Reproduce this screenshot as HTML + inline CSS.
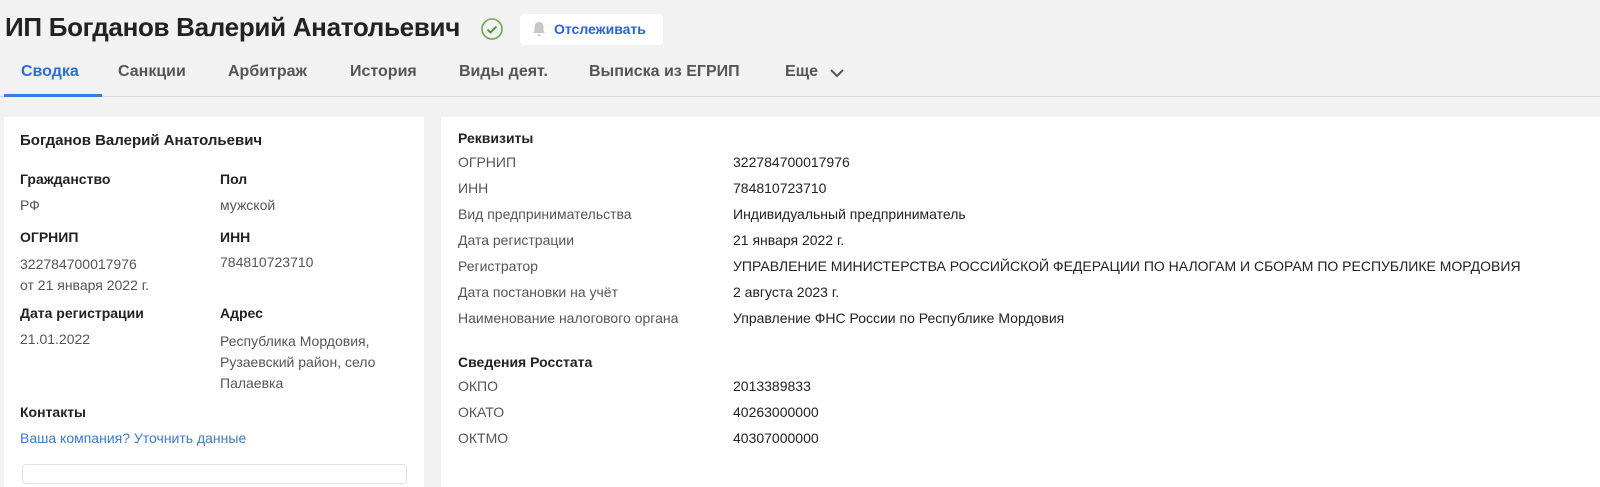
<!DOCTYPE html>
<html><head><meta charset="utf-8"><style>
*{margin:0;padding:0;box-sizing:border-box}
body{width:1600px;height:477px;overflow:hidden;background:#f2f2f2;font-family:"Liberation Sans",sans-serif;color:#222;position:relative}
.a{position:absolute;white-space:nowrap}
h1{position:absolute;left:5px;top:12px;font-size:26px;font-weight:bold;color:#222;letter-spacing:-0.3px}
.tab{position:absolute;top:63px;font-size:16px;font-weight:bold;color:#555}
.card{position:absolute;background:#fff}
.b{font-weight:bold;font-size:14px;color:#222}
.g{font-size:14px;color:#555}
.v{font-size:14px;color:#222}
</style></head><body>
<h1>ИП Богданов Валерий Анатольевич</h1>
<svg class="a" style="left:480px;top:17px" width="24" height="24" viewBox="0 0 24 24"><circle cx="12" cy="12" r="10" fill="none" stroke="#6aa84f" stroke-width="1.6"/><path d="M7.5 12.5l3 3 6-6" fill="none" stroke="#4a8f2a" stroke-width="1.8"/></svg>
<div class="a" style="left:520px;top:14px;width:143px;height:31px;background:#fff;border-radius:4px"></div>
<svg class="a" style="left:531px;top:21px" width="16" height="17" viewBox="0 0 16 17"><path d="M8 1c-3 0-4.5 2.5-4.5 5v4L2 12h12l-1.5-2V6c0-2.5-1.5-5-4.5-5zM6.3 13.5a1.7 1.7 0 0 0 3.4 0z" fill="#c8c8c8"/></svg>
<div class="a" style="left:554px;top:21px;font-size:14px;font-weight:bold;color:#2b62d9">Отслеживать</div>
<div class="tab" style="left:21px;color:#2b6cde">Сводка</div>
<div class="tab" style="left:118px">Санкции</div>
<div class="tab" style="left:228px">Арбитраж</div>
<div class="tab" style="left:350px">История</div>
<div class="tab" style="left:459px">Виды деят.</div>
<div class="tab" style="left:589px">Выписка из ЕГРИП</div>
<div class="tab" style="left:785px">Еще</div>
<svg class="a" style="left:829px;top:67px" width="16" height="12" viewBox="0 0 16 12"><path d="M2 3l6 6 6-6" fill="none" stroke="#555" stroke-width="2"/></svg>
<div class="a" style="left:0;top:96px;width:1600px;height:1px;background:#d8d8d8"></div>
<div class="a" style="left:4px;top:94px;width:98px;height:3px;background:#3b7be0"></div>

<div class="card" style="left:4px;top:117px;width:420px;height:370px"></div>
<div class="a b" style="left:20px;top:132px;font-size:15px">Богданов Валерий Анатольевич</div>
<div class="a b" style="left:20px;top:171px">Гражданство</div>
<div class="a g" style="left:20px;top:197px">РФ</div>
<div class="a b" style="left:220px;top:171px">Пол</div>
<div class="a g" style="left:220px;top:197px">мужской</div>
<div class="a b" style="left:20px;top:229px">ОГРНИП</div>
<div class="a g" style="left:20px;top:254px;line-height:21px">322784700017976<br>от 21 января 2022 г.</div>
<div class="a b" style="left:220px;top:229px">ИНН</div>
<div class="a g" style="left:220px;top:254px">784810723710</div>
<div class="a b" style="left:20px;top:305px">Дата регистрации</div>
<div class="a g" style="left:20px;top:331px">21.01.2022</div>
<div class="a b" style="left:220px;top:305px">Адрес</div>
<div class="a g" style="left:220px;top:331px;line-height:21px">Республика Мордовия,<br>Рузаевский район, село<br>Палаевка</div>
<div class="a b" style="left:20px;top:404px">Контакты</div>
<div class="a" style="left:20px;top:430px;font-size:14px;color:#3a78d8">Ваша компания? Уточнить данные</div>
<div class="a" style="left:22px;top:464px;width:385px;height:20px;border:1px solid #e2e2e2;border-radius:4px"></div>

<div class="card" style="left:441px;top:117px;width:1170px;height:370px"></div>
<div class="a b" style="left:458px;top:130px">Реквизиты</div>
<div class="a g" style="left:458px;top:154px">ОГРНИП</div><div class="a v" style="left:733px;top:154px">322784700017976</div>
<div class="a g" style="left:458px;top:180px">ИНН</div><div class="a v" style="left:733px;top:180px">784810723710</div>
<div class="a g" style="left:458px;top:206px">Вид предпринимательства</div><div class="a v" style="left:733px;top:206px">Индивидуальный предприниматель</div>
<div class="a g" style="left:458px;top:232px">Дата регистрации</div><div class="a v" style="left:733px;top:232px">21 января 2022 г.</div>
<div class="a g" style="left:458px;top:258px">Регистратор</div><div class="a v" style="left:733px;top:258px">УПРАВЛЕНИЕ МИНИСТЕРСТВА РОССИЙСКОЙ ФЕДЕРАЦИИ ПО НАЛОГАМ И СБОРАМ ПО РЕСПУБЛИКЕ МОРДОВИЯ</div>
<div class="a g" style="left:458px;top:284px">Дата постановки на учёт</div><div class="a v" style="left:733px;top:284px">2 августа 2023 г.</div>
<div class="a g" style="left:458px;top:310px">Наименование налогового органа</div><div class="a v" style="left:733px;top:310px">Управление ФНС России по Республике Мордовия</div>
<div class="a b" style="left:458px;top:354px">Сведения Росстата</div>
<div class="a g" style="left:458px;top:378px">ОКПО</div><div class="a v" style="left:733px;top:378px">2013389833</div>
<div class="a g" style="left:458px;top:404px">ОКАТО</div><div class="a v" style="left:733px;top:404px">40263000000</div>
<div class="a g" style="left:458px;top:430px">ОКТМО</div><div class="a v" style="left:733px;top:430px">40307000000</div>
</body></html>
